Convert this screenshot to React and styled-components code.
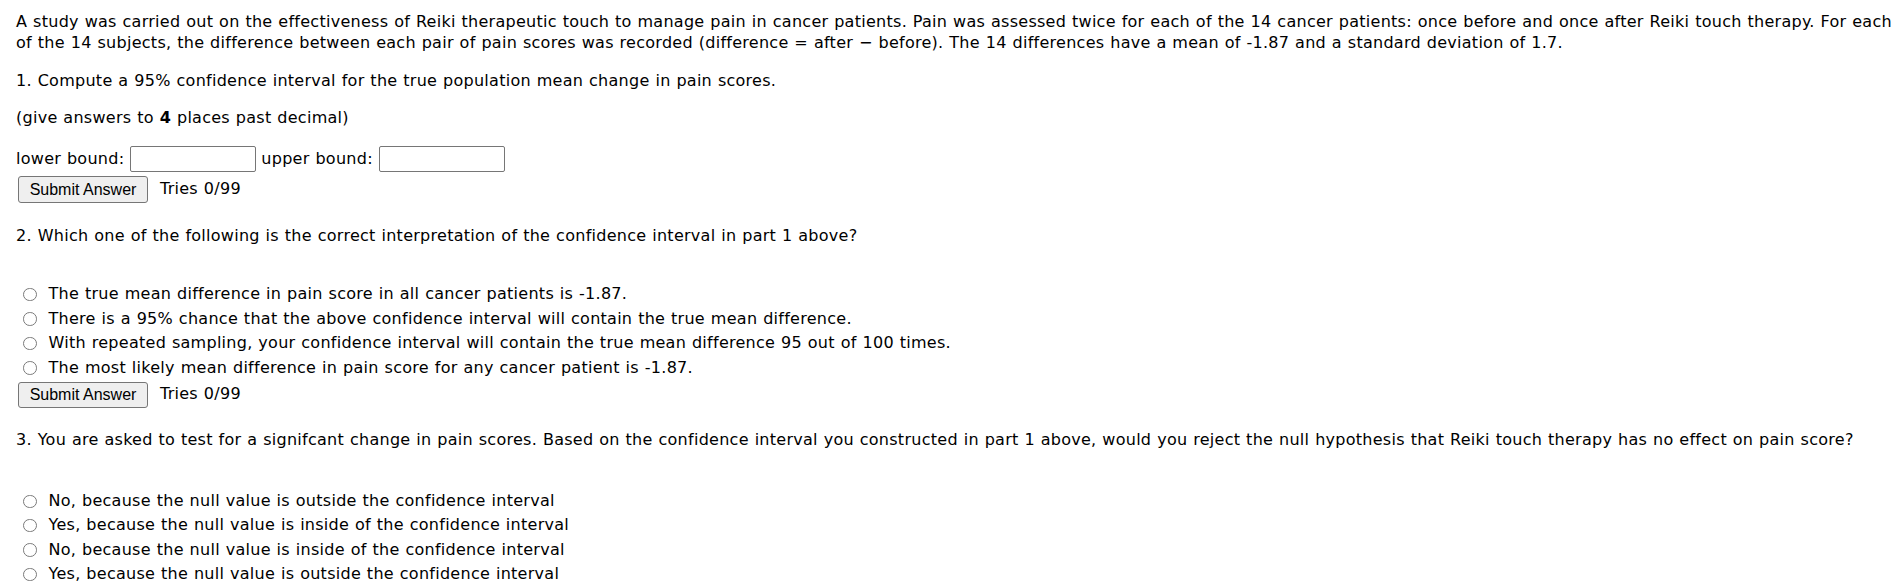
import React from "react";
import styled, { createGlobalStyle } from "styled-components";

const GlobalStyle = createGlobalStyle`
  html, body {
    margin: 0;
    padding: 0;
    background: #ffffff;
  }
  body {
    font-family: Verdana, "DejaVu Sans", sans-serif;
    font-size: 16px;
    letter-spacing: 0.27px;
    word-spacing: 0.5px;
    color: #000000;
  }
`;

const Page = styled.main`
  padding: 12px 0 0 16px;
  line-height: 20.6px;
`;

const Para = styled.p`
  margin: ${(p) => p.$top || 0}px 0 0 0;
`;

const Question = styled.section`
  display: flex;
  flex-direction: column;
`;

const BoundRow = styled.div`
  display: flex;
  align-items: center;
  margin-top: 17.5px;
  height: 26px;
`;

const BoundLabel = styled.label`
  margin-right: 6px;
  margin-left: ${(p) => (p.$lead ? 5 : 0)}px;
`;

const TextBox = styled.input`
  box-sizing: border-box;
  width: 126px;
  height: 26px;
  border: 1px solid #767676;
  border-radius: 2px;
  background: #ffffff;
  padding: 1px 3px;
  font-family: inherit;
  font-size: 14px;
  margin: 0;
`;

const SubmitRow = styled.div`
  display: flex;
  align-items: center;
  margin-top: ${(p) => p.$top || 4}px;
  margin-left: 2px;
`;

const SubmitButton = styled.button`
  box-sizing: border-box;
  height: 26.5px;
  width: 130px;
  padding: 0 6px;
  background: #efefef;
  border: 1px solid #767676;
  border-radius: 3px;
  font-family: "Liberation Sans", Arial, sans-serif;
  font-size: 16px;
  letter-spacing: 0;
  word-spacing: 0;
  color: #000000;
  line-height: 1;
`;

const Tries = styled.span`
  margin-left: 12px;
`;

const Options = styled.div`
  display: flex;
  flex-direction: column;
  margin-top: ${(p) => p.$top}px;
`;

const Option = styled.label`
  display: flex;
  align-items: center;
  height: 24.4px;
`;

const Radio = styled.input.attrs({ type: "radio" })`
  appearance: none;
  -webkit-appearance: none;
  box-sizing: border-box;
  width: 13.5px;
  height: 13.5px;
  margin: 0 12px 0 7px;
  border: 1px solid #7a7a7a;
  border-radius: 50%;
  background: #ffffff;
  flex: none;
`;

const q2Options = [
  "The true mean difference in pain score in all cancer patients is -1.87.",
  "There is a 95% chance that the above confidence interval will contain the true mean difference.",
  "With repeated sampling, your confidence interval will contain the true mean difference 95 out of 100 times.",
  "The most likely mean difference in pain score for any cancer patient is -1.87.",
];

const q3Options = [
  "No, because the null value is outside the confidence interval",
  "Yes, because the null value is inside of the confidence interval",
  "No, because the null value is inside of the confidence interval",
  "Yes, because the null value is outside the confidence interval",
];

function Submit({ top }) {
  return (
    <SubmitRow $top={top}>
      <SubmitButton type="button">Submit Answer</SubmitButton>
      <Tries>Tries 0/99</Tries>
    </SubmitRow>
  );
}

export default function App() {
  return (
    <>
      <GlobalStyle />
      <Page>
        <Para>
          A study was carried out on the effectiveness of Reiki therapeutic touch to manage pain in cancer patients. Pain
          was assessed twice for each of the 14 cancer patients: once before and once after Reiki touch therapy. For each
          of the 14 subjects, the difference between each pair of pain scores was recorded (difference = after − before).
          The 14 differences have a mean of -1.87 and a standard deviation of 1.7.
        </Para>

        <Question>
          <Para $top={18}>1. Compute a 95% confidence interval for the true population mean change in pain scores.</Para>
          <Para $top={16}>
            (give answers to <b>4</b> places past decimal)
          </Para>
          <BoundRow>
            <BoundLabel>lower bound:</BoundLabel>
            <TextBox type="text" />
            <BoundLabel $lead>upper bound:</BoundLabel>
            <TextBox type="text" />
          </BoundRow>
          <Submit top={4.5} />
        </Question>

        <Question>
          <Para $top={23}>2. Which one of the following is the correct interpretation of the confidence interval in part 1 above?</Para>
          <Options $top={36}>
            {q2Options.map((t) => (
              <Option key={t}>
                <Radio name="q2" />
                {t}
              </Option>
            ))}
          </Options>
          <Submit top={1.5} />
        </Question>

        <Question>
          <Para $top={22}>
            3. You are asked to test for a signifcant change in pain scores. Based on the confidence interval you constructed
            in part 1 above, would you reject the null hypothesis that Reiki touch therapy has no effect on pain score?
          </Para>
          <Options $top={38.5}>
            {q3Options.map((t) => (
              <Option key={t}>
                <Radio name="q3" />
                {t}
              </Option>
            ))}
          </Options>
          <Submit top={1.5} />
        </Question>
      </Page>
    </>
  );
}
